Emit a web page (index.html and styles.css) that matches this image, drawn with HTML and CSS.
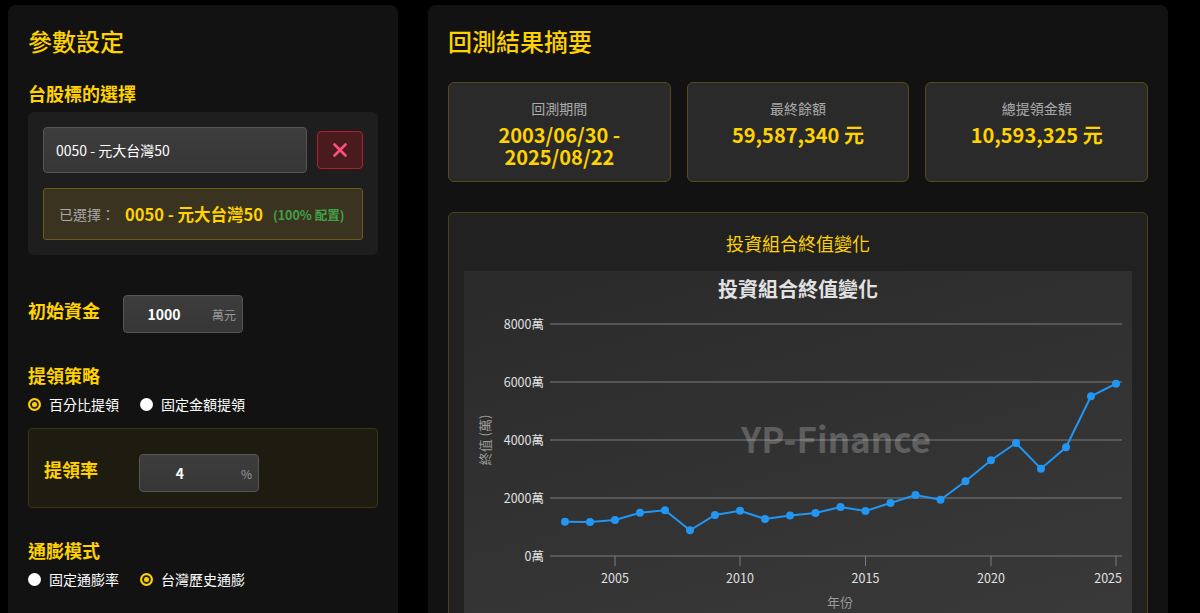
FILE: index.html
```html
<!DOCTYPE html>
<html lang="zh-Hant">
<head>
  <meta charset="UTF-8" />
  <meta name="viewport" content="width=device-width, initial-scale=1" />
  <title>YP-Finance 回測</title>
  <link rel="stylesheet" href="styles.css">
</head>
<body>
  <div class="layout">
    <aside class="panel">
      <h2 class="panel-title">參數設定</h2>

      <h3 class="section-title">台股標的選擇</h3>
      <div class="stock-box">
        <div class="stock-row">
          <input class="text-input" type="text" value="0050 - 元大台灣50" />
          <button class="clear-btn" aria-label="清除">
            <svg width="16" height="16" viewBox="0 0 16 16">
              <path d="M2.5 2.5 L13.5 13.5 M13.5 2.5 L2.5 13.5" stroke="#ff4f7d" stroke-width="2.6" stroke-linecap="round" fill="none"/>
            </svg>
          </button>
        </div>
        <div class="selected-box">
          <span class="selected-label">已選擇：</span>
          <span class="selected-name">0050 - 元大台灣50</span>
          <span class="selected-weight">(100% 配置)</span>
        </div>
      </div>

      <div class="field-row capital-row">
        <span class="field-label">初始資金</span>
        <div class="num-input">
          <input class="num-value" type="text" value="1000" />
          <span class="num-unit">萬元</span>
        </div>
      </div>

      <h3 class="section-title strategy-title">提領策略</h3>
      <div class="radio-row">
        <label class="radio"><span class="radio-dot checked"></span>百分比提領</label>
        <label class="radio"><span class="radio-dot"></span>固定金額提領</label>
      </div>

      <div class="rate-box">
        <div class="field-row">
          <span class="field-label">提領率</span>
          <div class="num-input">
            <input class="num-value" type="text" value="4" />
            <span class="num-unit">%</span>
          </div>
        </div>
      </div>

      <h3 class="section-title inflation-title">通膨模式</h3>
      <div class="radio-row">
        <label class="radio"><span class="radio-dot"></span>固定通膨率</label>
        <label class="radio"><span class="radio-dot checked"></span>台灣歷史通膨</label>
      </div>
    </aside>

    <main class="panel">
      <h2 class="panel-title">回測結果摘要</h2>

      <div class="summary">
        <div class="summary-card">
          <div class="summary-label">回測期間</div>
          <div class="summary-value">2003/06/30 -<br>2025/08/22</div>
        </div>
        <div class="summary-card">
          <div class="summary-label">最終餘額</div>
          <div class="summary-value">59,587,340 元</div>
        </div>
        <div class="summary-card">
          <div class="summary-label">總提領金額</div>
          <div class="summary-value">10,593,325 元</div>
        </div>
      </div>

      <div class="chart-card">
        <div class="chart-heading">投資組合終值變化</div>
        <div class="chart-canvas">
          <svg class="chart" width="668" height="350" viewBox="0 0 668 350">
            <text class="chart-title" x="334" y="26" text-anchor="middle">投資組合終值變化</text>

            <g class="grid">
              <line x1="86" y1="53" x2="658" y2="53"/>
              <line x1="86" y1="111" x2="658" y2="111"/>
              <line x1="86" y1="169" x2="658" y2="169"/>
              <line x1="86" y1="227" x2="658" y2="227"/>
              <line x1="86" y1="285" x2="658" y2="285"/>
              <line x1="151" y1="285" x2="151" y2="295"/>
              <line x1="276" y1="285" x2="276" y2="295"/>
              <line x1="401.5" y1="285" x2="401.5" y2="295"/>
              <line x1="527" y1="285" x2="527" y2="295"/>
              <line x1="652" y1="285" x2="652" y2="295"/>
            </g>

            <g class="tick-label" text-anchor="end">
              <text x="80" y="57.5">8000萬</text>
              <text x="80" y="115.5">6000萬</text>
              <text x="80" y="173.5">4000萬</text>
              <text x="80" y="231.5">2000萬</text>
              <text x="80" y="289.5">0萬</text>
            </g>
            <g class="tick-label" text-anchor="middle">
              <text x="151" y="311.5">2005</text>
              <text x="276" y="311.5">2010</text>
              <text x="401.5" y="311.5">2015</text>
              <text x="527" y="311.5">2020</text>
              <text x="658" y="311.5" text-anchor="end">2025</text>
            </g>

            <text class="axis-title" x="376" y="336" text-anchor="middle">年份</text>
            <text class="axis-title" transform="translate(26,169) rotate(-90)" text-anchor="middle">終值 (萬)</text>

            <text class="watermark" x="372" y="182" text-anchor="middle">YP-Finance</text>

            <polyline class="series" points="101,250.7 126,251 151,249 176,241.7 201,239.3 226,259.3 251,244 276,239.8 301,248 326,244.5 351.5,242 376.5,236 401.5,240 426.5,232 451.5,224 476.5,228.7 501.5,210.3 527,189.3 552,172 577,197.7 602,176.3 627,125.3 652,112.7"/>
            <g class="points">
              <circle cx="101" cy="250.7" r="4"/>
              <circle cx="126" cy="251" r="4"/>
              <circle cx="151" cy="249" r="4"/>
              <circle cx="176" cy="241.7" r="4"/>
              <circle cx="201" cy="239.3" r="4"/>
              <circle cx="226" cy="259.3" r="4"/>
              <circle cx="251" cy="244" r="4"/>
              <circle cx="276" cy="239.8" r="4"/>
              <circle cx="301" cy="248" r="4"/>
              <circle cx="326" cy="244.5" r="4"/>
              <circle cx="351.5" cy="242" r="4"/>
              <circle cx="376.5" cy="236" r="4"/>
              <circle cx="401.5" cy="240" r="4"/>
              <circle cx="426.5" cy="232" r="4"/>
              <circle cx="451.5" cy="224" r="4"/>
              <circle cx="476.5" cy="228.7" r="4"/>
              <circle cx="501.5" cy="210.3" r="4"/>
              <circle cx="527" cy="189.3" r="4"/>
              <circle cx="552" cy="172" r="4"/>
              <circle cx="577" cy="197.7" r="4"/>
              <circle cx="602" cy="176.3" r="4"/>
              <circle cx="627" cy="125.3" r="4"/>
              <circle cx="652" cy="112.7" r="4"/>
            </g>
          </svg>
        </div>
      </div>
    </main>
  </div>
</body>
</html>
```

FILE: styles.css
```css
* {
  box-sizing: border-box;
  margin: 0;
  padding: 0;
}

html, body {
  background: #000;
  color: #fff;
  font-family: "Noto Sans CJK TC", "Noto Sans", sans-serif;
}

body {
  padding: 5px 0 0 8px;
}

.layout {
  display: grid;
  grid-template-columns: 390px 740px;
  gap: 30px;
  min-height: 640px;
}

.panel {
  background: #121212;
  border-radius: 8px;
  padding: 20px;
}

.panel-title {
  font-size: 24px;
  line-height: 32px;
  font-weight: 500;
  color: #ffd200;
}

.section-title {
  font-size: 18px;
  line-height: 24px;
  font-weight: bold;
  color: #ffd200;
  margin-top: 24px;
}

/* stock picker */
.stock-box {
  background: #1e1e1e;
  border-radius: 6px;
  padding: 15px;
  margin-top: 7px;
}

.stock-row {
  display: flex;
  align-items: center;
  gap: 10px;
}

.text-input {
  flex: 1;
  height: 46px;
  background: linear-gradient(#3d3d3d, #363636);
  border: 1px solid #555;
  border-radius: 4px;
  padding: 0 12px;
  color: #fff;
  font: inherit;
  font-size: 14px;
  outline: none;
}

.clear-btn {
  width: 46px;
  height: 38px;
  background: #4a1b1e;
  border: 1px solid #b51d2a;
  border-radius: 4px;
  display: flex;
  align-items: center;
  justify-content: center;
}

.selected-box {
  margin-top: 15px;
  height: 52px;
  background: #3a3320;
  border: 1px solid #6b5a18;
  border-radius: 3px;
  padding: 0 15px;
  display: flex;
  align-items: center;
  gap: 10px;
  white-space: nowrap;
}

.selected-label {
  font-size: 14px;
  color: #a8a8a8;
}

.selected-name {
  font-size: 16.5px;
  font-weight: bold;
  color: #ffd200;
}

.selected-weight {
  font-size: 12.5px;
  font-weight: bold;
  color: #43a047;
}

/* number fields */
.field-row {
  display: flex;
  align-items: flex-start;
  gap: 15px;
}

.capital-row {
  margin-top: 40px;
}

.field-label {
  width: 80px;
  font-size: 18px;
  line-height: 30px;
  font-weight: bold;
  color: #ffd200;
}

.num-input {
  width: 120px;
  height: 38px;
  background: linear-gradient(#3d3d3d, #363636);
  border: 1px solid #555;
  border-radius: 4px;
  display: flex;
  align-items: center;
  padding-right: 6px;
}

.num-value {
  width: 80px;
  background: none;
  border: none;
  outline: none;
  text-align: center;
  color: #fff;
  font: inherit;
  font-size: 14px;
  font-weight: bold;
}

.num-unit {
  margin-left: auto;
  font-size: 12px;
  color: #999;
}

.strategy-title,
.inflation-title {
  margin-top: 30px;
}

/* radios */
.radio-row {
  display: flex;
  gap: 21px;
  margin-top: 7px;
}

.radio {
  display: flex;
  align-items: center;
  gap: 8px;
  font-size: 14px;
  line-height: 20px;
  color: #fff;
}

.radio-dot {
  width: 13px;
  height: 13px;
  border-radius: 50%;
  background: #fff;
}

.radio-dot.checked {
  background: #ffd200;
  border: 2px solid #ffd200;
  box-shadow: inset 0 0 0 2px #222;
}

.rate-box {
  margin-top: 14px;
  background: #1e1b10;
  border: 1px solid #3d3413;
  border-radius: 4px;
  padding: 25px 15px 15px;
}

/* summary */
.summary {
  display: grid;
  grid-template-columns: repeat(3, 1fr);
  gap: 16px;
  margin-top: 25px;
}

.summary-card {
  height: 100px;
  background: #2a2a2a;
  border: 1px solid #584a16;
  border-radius: 6px;
  padding-top: 15px;
  text-align: center;
}

.summary-label {
  font-size: 14px;
  line-height: 20px;
  color: #aaa;
}

.summary-value {
  margin-top: 6px;
  font-size: 20px;
  line-height: 21.5px;
  font-weight: bold;
  color: #ffd200;
}

/* chart */
.chart-card {
  margin-top: 30px;
  background: #212121;
  border: 1px solid #4c4116;
  border-radius: 6px;
  padding: 15px 15px 15px;
}

.chart-heading {
  text-align: center;
  font-size: 18px;
  line-height: 31px;
  color: #ffd200;
  margin-bottom: 12px;
}

.chart-canvas {
  background: linear-gradient(165deg, #2a2a2a, #3a3a3a);
  height: 360px;
}

.chart {
  display: block;
  font-family: "Noto Sans CJK TC", "Noto Sans", sans-serif;
}

.chart-title {
  font-size: 20px;
  font-weight: bold;
  fill: #e2e2e2;
}

.grid line {
  stroke: #7c7c7c;
  stroke-width: 1;
}

.tick-label {
  font-size: 12.5px;
  fill: #e0e0e0;
}

.axis-title {
  font-size: 13px;
  fill: #999;
}

.watermark {
  font-size: 35px;
  font-weight: bold;
  fill: rgba(255, 255, 255, 0.22);
}

.series {
  fill: none;
  stroke: #2196f3;
  stroke-width: 2;
}

.points circle {
  fill: #2196f3;
}
```
